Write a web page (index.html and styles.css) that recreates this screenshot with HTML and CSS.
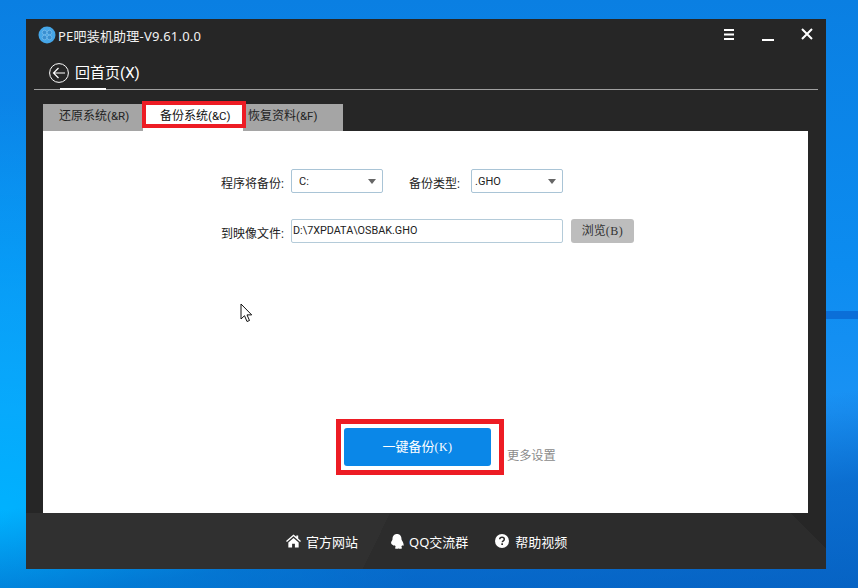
FILE: index.html
```html
<!DOCTYPE html>
<html lang="zh-CN">
<head>
  <meta charset="UTF-8">
  <meta name="viewport" content="width=device-width, initial-scale=1.0">
  <title>PE吧装机助理</title>
  <link rel="stylesheet" href="styles.css">
</head>
<body>
  <div class="window">
    <header class="titlebar">
      <div class="app-title">
        <svg class="app-logo" width="18" height="18" viewBox="0 0 18 18">
          <circle cx="9" cy="9" r="8.500" fill="#45a6e8"/>
          <circle cx="6.500" cy="6.500" r="2.300" fill="#3a8fd0" stroke="#7cbfec" stroke-width=".7"/>
          <circle cx="11.500" cy="6.500" r="2.300" fill="#3a8fd0" stroke="#7cbfec" stroke-width=".7"/>
          <circle cx="6.500" cy="11.500" r="2.300" fill="#3a8fd0" stroke="#7cbfec" stroke-width=".7"/>
          <circle cx="11.500" cy="11.500" r="2.300" fill="#3a8fd0" stroke="#7cbfec" stroke-width=".7"/>
        </svg>
        <span>PE吧装机助理-V9.61.0.0</span>
      </div>
      <div class="win-btns">
        <svg width="10" height="11" viewBox="0 0 10 11"><path d="M0 0h10v2H0zM0 4.500h10v2H0zM0 9h10v2H0z" fill="#fff"/></svg>
        <svg class="win-min" width="12" height="2" viewBox="0 0 12 2"><path d="M0 0h12v2H0z" fill="#fff"/></svg>
        <svg width="12" height="12" viewBox="0 0 12 12"><path d="M1 1l10 10M11 1L1 11" stroke="#fff" stroke-width="2"/></svg>
      </div>
    </header>

    <div class="backbar">
      <div class="back-link">
        <svg width="20" height="20" viewBox="0 0 20 20" fill="none" stroke="#fff">
          <circle cx="10" cy="10" r="9.400"/>
          <path d="M16 10H4.500M9.500 5l-5 5 5 5" stroke-width="1.200"/>
        </svg>
        <span>回首页(X)</span>
      </div>
    </div>

    <div class="tabs">
      <div class="tab tab-first">还原系统<small>(&amp;R)</small></div>
      <div class="tab tab-active">备份系统<small>(&amp;C)</small><span class="red-mark tab-mark"></span></div>
      <div class="tab tab-last">恢复资料<small>(&amp;F)</small></div>
    </div>

    <main class="panel">
      <div class="form">
        <div class="row">
          <label>程序将备份:</label>
          <div class="select"><span class="c-val">C:</span><i class="arrow"></i></div>
          <label class="label-type">备份类型:</label>
          <div class="select"><span>.GHO</span><i class="arrow"></i></div>
        </div>
        <div class="row row-file">
          <label>到映像文件:</label>
          <div class="input">D:\7XPDATA\OSBAK.GHO</div>
          <div class="browse">浏览<span class="hotkey">(B)</span></div>
        </div>
      </div>

      <svg class="cursor" width="13" height="20" viewBox="0 0 13 20">
        <path d="M1 1v15l3.500-3.300 2.500 5.800 2.500-1-2.500-5.600h4.700z" fill="#fff" stroke="#111" stroke-width="1"/>
      </svg>

      <div class="actions">
        <div class="primary">一键备份<span class="hotkey">(K)</span><span class="red-mark btn-mark"></span></div>
        <a class="more">更多设置</a>
      </div>
    </main>

    <footer class="footer">
      <a class="foot-link">
        <svg width="15" height="14" viewBox="0 0 16 14"><path d="M8 0l3 2.500V1h2v3.200L16 7l-1 1-7-6-7 6-1-1zM2.500 8.500L8 3.800l5.500 4.700V14H9.500v-4h-3v4h-4z" fill="#fff"/></svg>
        <span>官方网站</span>
      </a>
      <a class="foot-link">
        <svg width="14" height="15" viewBox="0 0 14 15"><path d="M7 0c3 0 4.500 2.300 4.500 5 0 .6.100 1 .6 1.700.9 1.300 1.700 3 1.500 4.600-.1.900-.8.700-1.500-.3-.1 1-.5 1.600-1 2.100.8.300 1 .7 1 1 0 .5-1.200.9-3 .6-.4-.2-.8-.2-1.200 0-1.800.3-3 0-3-.6 0-.4.300-.7 1-1-.5-.5-.9-1.100-1-2.100-.7 1-1.400 1.200-1.500.3C.2 9.700 1 8 1.900 6.700 2.400 6 2.500 5.600 2.500 5 2.500 2.300 4 0 7 0z" fill="#fff"/></svg>
        <span>QQ交流群</span>
      </a>
      <a class="foot-link foot-help">
        <svg width="14" height="14" viewBox="0 0 14 14">
          <circle cx="7" cy="7" r="7" fill="#fff"/>
          <path d="M4.700 5.300C4.800 3.900 5.800 3.200 7 3.200c1.300 0 2.300.8 2.300 2 0 1.700-2 1.600-2 3.100" fill="none" stroke="#2d2d2d" stroke-width="1.500"/>
          <rect x="6.300" y="9.300" width="1.700" height="1.700" fill="#2d2d2d"/>
        </svg>
        <span>帮助视频</span>
      </a>
    </footer>
  </div>
</body>
</html>
```

FILE: styles.css
```css
* { box-sizing: border-box; }
html, body { height: 100%; }
body {
  margin: 0;
  overflow: hidden;
  padding: 19px 32px 19px 26px;
  font-family: Roboto, "Noto Sans CJK SC", sans-serif;
  background:
    linear-gradient(#0b6fd8, #0b6fd8) right 311px / 32px 8px no-repeat,
    linear-gradient(172deg, transparent 0 72%, rgba(0,70,170,0.45) 85%, rgba(0,60,160,0.5) 100%),
    radial-gradient(ellipse 420px 420px at 0 520px, #00b2ff 0%, rgba(0,178,255,0) 100%),
    linear-gradient(180deg, #0a7fe2 0%, #0c8cf0 45%, #1a92f4 70%, #0c8ae8 100%);
}

.window { width: 800px; height: 550px; background: #262626; display: flex; flex-direction: column; }

.titlebar { height: 32px; display: flex; align-items: center; justify-content: space-between; padding: 0 13px 0 12px; color: #f2f2f2; }
.app-title { display: flex; align-items: center; gap: 2px; font-family: "Noto Sans", "Noto Sans CJK SC", sans-serif; font-size: 13px; letter-spacing: .2px; }
.win-btns { display: flex; align-items: center; gap: 21px; margin-top: -2px; }
.win-min { margin: 11px 6px 0 7px; }

.backbar { height: 39px; margin: 0 8px; border-bottom: 1px solid #a0a0a0; padding: 12px 0 0 15px; position: relative; }
.backbar::after { content: ''; position: absolute; left: 26px; bottom: -1px; width: 46px; height: 2px; background: #fff; }
.back-link { display: flex; align-items: center; gap: 6px; color: #fff; font-size: 15px; line-height: 20px; }

.tabs { display: flex; margin: 14px 0 0 17px; height: 27px; width: 300px; background: #a5a5a5; flex: none; }
.tab { width: 100px; font-size: 12px; line-height: 25px; color: #222; position: relative; white-space: nowrap; padding-left: 16px; }
.tab small { font-size: 11.500px; }
.tab-active { background: #fff; color: #111; padding-left: 17px; }
.tab-last { padding-left: 5px; }

.red-mark { position: absolute; border: solid #ed1c24; }
.tab-mark { left: -1px; top: -3px; width: 104px; height: 27px; border-width: 4px; }
.btn-mark { left: -8px; top: -9px; width: 168px; height: 56px; border-width: 5px; }

.panel { width: 765px; height: 382px; margin-left: 17px; background: #fff; position: relative; }

.form { padding: 38px 0 0 178px; }
.row { display: flex; align-items: center; height: 24px; }
.row-file { margin-top: 26px; }
label { font-size: 12px; width: 70px; margin-top: 2px; color: #222; white-space: nowrap; }
.label-type { width: 62px; margin-left: 26px; }
.select { width: 92px; height: 24px; border: 1px solid #a9c4d6; border-radius: 2px; display: flex; align-items: center; justify-content: space-between; padding: 0 6px 0 3px; font-size: 11px; color: #222; }
.c-val { padding-left: 4px; }
.arrow { width: 0; height: 0; border: solid transparent; border-width: 5.500px 4.500px 0; border-top-color: #666; }
.input { width: 272px; height: 24px; border: 1px solid #b4cbd9; border-radius: 2px; padding: 0 1px; font-size: 10.800px; line-height: 22px; color: #222; }
.browse { width: 63px; height: 24px; margin-left: 8px; background: #bdbdbd; border-radius: 3px; font-size: 12px; line-height: 25px; text-align: center; color: #333; }
.hotkey { font-family: "Liberation Serif", serif; letter-spacing: .5px; font-size: 12px; }

.cursor { position: absolute; left: 197px; top: 172px; }

.actions { position: absolute; left: 301px; top: 297px; display: flex; }
.primary { width: 147px; height: 38px; background: #0a87e8; border-radius: 3px; color: #fff; font-size: 13px; line-height: 38px; text-align: center; position: relative; }
.more { margin: 20px 0 0 16px; font-size: 12.200px; line-height: 17px; color: #8a8a8a; }

.footer {
  flex: 1;
  display: flex;
  align-items: center;
  gap: 32px;
  padding-left: 260px;
  background:
    linear-gradient(225deg, #262626 25px, transparent 25px),
    linear-gradient(116deg, #303030 0 44%, #2c2c2c 44% 100%);
}
.foot-link { display: flex; align-items: center; gap: 5px; color: #fff; font-family: "Noto Sans", "Noto Sans CJK SC", sans-serif; font-size: 13px; }
.foot-help { margin-left: -5px; gap: 6px; }
```
